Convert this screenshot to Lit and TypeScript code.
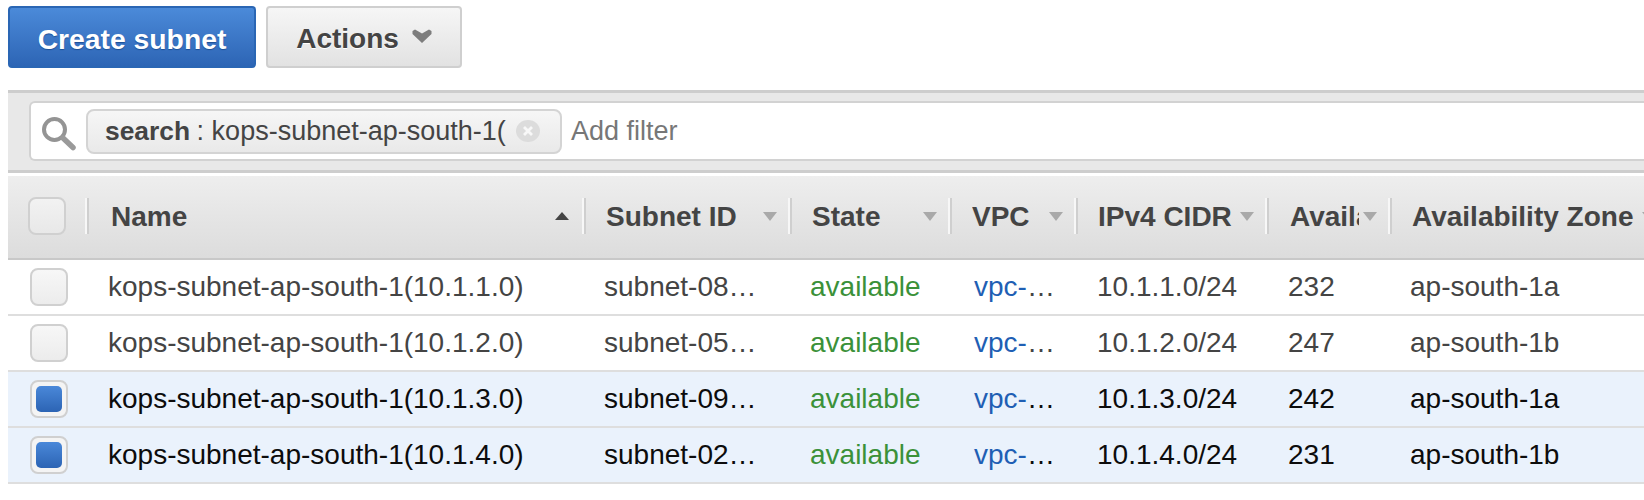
import { LitElement, css, html, svg } from 'lit';
import { customElement } from 'lit/decorators.js';

interface Row {
  name: string;
  id: string;
  cidr: string;
  free: string;
  zone: string;
  selected?: boolean;
}

const ROWS: Row[] = [
  { name: 'kops-subnet-ap-south-1(10.1.1.0)', id: 'subnet-08…', cidr: '10.1.1.0/24', free: '232', zone: 'ap-south-1a' },
  { name: 'kops-subnet-ap-south-1(10.1.2.0)', id: 'subnet-05…', cidr: '10.1.2.0/24', free: '247', zone: 'ap-south-1b' },
  { name: 'kops-subnet-ap-south-1(10.1.3.0)', id: 'subnet-09…', cidr: '10.1.3.0/24', free: '242', zone: 'ap-south-1a', selected: true },
  { name: 'kops-subnet-ap-south-1(10.1.4.0)', id: 'subnet-02…', cidr: '10.1.4.0/24', free: '231', zone: 'ap-south-1b', selected: true },
];

const COLUMNS = ['Subnet ID', 'State', 'VPC', 'IPv4 CIDR', 'Availability Zone', 'Availability Zone'];

const chevron = svg`<svg class="chevron" width="20" height="14" viewBox="0 0 20 14">
  <path d="M0.5 2 L3 0.5 L10 4.5 L17 0.5 L19.5 2 L19.5 5 L10 14 L0.5 5 Z" fill="#7d7d7d" />
</svg>`;

const magnifier = svg`<svg class="lens" width="36" height="34" viewBox="0 0 36 34">
  <circle cx="13.5" cy="12.5" r="10.5" fill="#fff" stroke="#949494" stroke-width="4" />
  <path d="M22 21 L32 30.5" stroke="#9a9a9a" stroke-width="5.5" stroke-linecap="round" />
</svg>`;

const clear = svg`<svg class="clear" width="24" height="22" viewBox="0 0 24 22">
  <ellipse cx="12" cy="11" rx="12" ry="11" fill="#dcdcdc" />
  <path d="M8 7 L16 15 M16 7 L8 15" stroke="#f8f8f8" stroke-width="2.8" />
</svg>`;

@customElement('app-root')
export class AppRoot extends LitElement {
  static styles = css`
    :host {
      display: block;
      width: 1644px;
      height: 500px;
      overflow: hidden;
      box-sizing: border-box;
      padding: 6px 0 0 8px;
      background: #fff;
      color: #444;
      font-family: 'Liberation Sans', Arial, sans-serif;
      font-size: 28px;
    }

    .toolbar {
      display: flex;
      gap: 10px;
    }

    button {
      box-sizing: border-box;
      height: 62px;
      border-radius: 4px;
      font: bold 28px 'Liberation Sans', Arial, sans-serif;
      padding: 4px 0 0;
    }

    .create {
      width: 248px;
      border: 2px solid #2a66b4;
      background: linear-gradient(#4b8ad9, #2d65b5);
      color: #fff;
      font-size: 28.3px;
      text-shadow: 0 1px 1px #1d4f96;
    }

    .actions {
      width: 196px;
      display: flex;
      align-items: center;
      justify-content: center;
      gap: 13px;
      border: 2px solid #cfcfcf;
      background: linear-gradient(#f6f6f6, #e2e2e2);
      color: #444;
      text-shadow: 0 1px 0 #fff;
    }

    .chevron {
      margin-top: -7px;
    }

    .filter {
      margin-top: 22px;
      height: 83px;
      box-sizing: border-box;
      border-top: 3px solid #cdcdcd;
      border-bottom: 3px solid #cdcdcd;
      background: #e8e8e8;
      padding: 8px 0 0 21px;
    }

    .input {
      box-sizing: border-box;
      height: 60px;
      border: 2px solid #d2d2d2;
      border-right: 0;
      border-radius: 6px 0 0 6px;
      background: #fff;
      display: flex;
      align-items: center;
      padding-left: 10px;
      color: #777;
      font-size: 27px;
    }

    .lens {
      margin: 6px 9px 0 0;
      flex: none;
    }

    .token {
      box-sizing: border-box;
      width: 476px;
      height: 45px;
      margin-right: 9px;
      border: 2px solid #d4d4d4;
      border-radius: 8px;
      background: linear-gradient(#f6f6f6, #e9e9e9);
      display: flex;
      align-items: center;
      padding: 0 20px 0 17px;
      color: #444;
      white-space: pre;
    }

    .token b {
      font-size: 26.4px;
      margin-right: -1px;
    }

    .clear {
      margin-left: auto;
    }

    .table {
      margin-top: 3px;
    }

    .row {
      display: grid;
      align-items: center;
    }

    .head {
      grid-template-columns: 77px 497px 206px 160px 126px 191px 123px 279px;
      height: 84px;
      border-bottom: 2px solid #c8c8c8;
      background: linear-gradient(#eeeeee, #dcdcdc);
      font-weight: bold;
      padding-bottom: 2px;
      box-sizing: border-box;
    }

    .th {
      box-sizing: border-box;
      height: 36px;
      display: flex;
      align-items: center;
      padding: 0 11px 0 22px;
      border-left: 2px solid #f7f7f7;
      box-shadow: inset 2px 0 0 #cfcfcf;
      white-space: nowrap;
    }

    .th:nth-child(2) {
      padding: 0 13px 0 24px;
    }

    .th:nth-child(7) {
      padding-left: 23px;
    }

    .th span {
      flex: 1;
      min-width: 0;
      overflow: hidden;
      padding-top: 2px;
    }

    .th i {
      flex: none;
      margin-left: 2px;
      width: 0;
      height: 0;
      border-left: 7.5px solid transparent;
      border-right: 7.5px solid transparent;
      border-top: 9px solid #a9a9a9;
    }

    .th:nth-child(7) i {
      margin-left: 4px;
    }

    .th i.up {
      border-top: 0;
      border-bottom: 8px solid #444;
    }

    .body {
      grid-template-columns: 79px 497px 206px 160px 126px 191px 123px 277px;
      box-sizing: border-box;
      height: 56px;
      border-bottom: 2px solid #dedede;
    }

    .body.selected {
      background: #eaf2fc;
      color: #0c0c0c;
    }

    .td {
      padding-left: 21px;
      white-space: nowrap;
    }

    .td:nth-child(3),
    .td:nth-child(4),
    .td:nth-child(8) {
      padding-left: 20px;
    }

    .td:nth-child(5) {
      padding-left: 24px;
    }

    .green {
      color: #3b9139;
    }

    .blue {
      color: #1f5fb4;
    }

    .check {
      box-sizing: border-box;
      width: 38px;
      height: 38px;
      margin-left: 22px;
      border: 2px solid #d0d0d0;
      border-radius: 8px;
      background: linear-gradient(#f7f7f7, #ececec);
      padding: 4px;
    }

    .head .check {
      margin-left: 20px;
      background: linear-gradient(#f2f2f2, #e8e8e8);
    }

    .check.on {
      background: #f4f4f4;
    }

    .check.on::before {
      content: '';
      display: block;
      width: 100%;
      height: 100%;
      border-radius: 5px;
      background: linear-gradient(#4a88d9, #2c64b4);
    }
  `;

  private renderHead() {
    return html`
      <div class="row head">
        <div class="check"></div>
        <div class="th"><span>Name</span><i class="up"></i></div>
        ${COLUMNS.map((label) => html`<div class="th"><span>${label}</span><i></i></div>`)}
      </div>
    `;
  }

  private renderRow(row: Row) {
    return html`
      <div class="row body ${row.selected ? 'selected' : ''}">
        <div class="check ${row.selected ? 'on' : ''}"></div>
        <div class="td">${row.name}</div>
        <div class="td">${row.id}</div>
        <div class="td green">available</div>
        <div class="td"><span class="blue">vpc-</span>…</div>
        <div class="td">${row.cidr}</div>
        <div class="td">${row.free}</div>
        <div class="td">${row.zone}</div>
      </div>
    `;
  }

  protected render() {
    return html`
      <div class="toolbar">
        <button class="create">Create subnet</button>
        <button class="actions">Actions ${chevron}</button>
      </div>
      <div class="filter">
        <div class="input">
          ${magnifier}
          <div class="token"><b>search</b> : kops-subnet-ap-south-1(${clear}</div>
          Add filter
        </div>
      </div>
      <div class="table">
        ${this.renderHead()}
        ${ROWS.map((row) => this.renderRow(row))}
      </div>
    `;
  }
}
